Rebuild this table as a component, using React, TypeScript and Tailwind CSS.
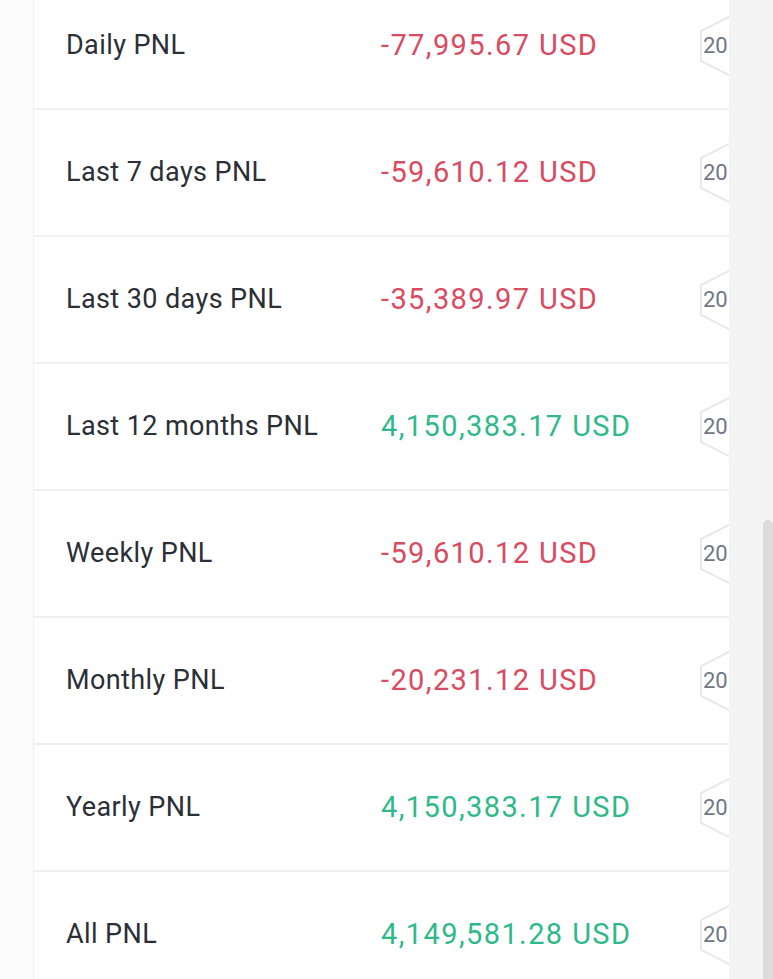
import React from "react";

type Row = { label: string; value: string; up: boolean };

const rows: Row[] = [
	{ label: "Daily PNL", value: "-77,995.67 USD", up: false },
	{ label: "Last 7 days PNL", value: "-59,610.12 USD", up: false },
	{ label: "Last 30 days PNL", value: "-35,389.97 USD", up: false },
	{ label: "Last 12 months PNL", value: "4,150,383.17 USD", up: true },
	{ label: "Weekly PNL", value: "-59,610.12 USD", up: false },
	{ label: "Monthly PNL", value: "-20,231.12 USD", up: false },
	{ label: "Yearly PNL", value: "4,150,383.17 USD", up: true },
	{ label: "All PNL", value: "4,149,581.28 USD", up: true },
];

function HexBadge() {
	return (
		<div className="relative w-[58px] h-[60px] shrink-0 flex items-center">
			<svg className="absolute inset-0" width="58" height="60" viewBox="0 0 58 60" fill="none">
				<path d="M29 1 L1 15 L1 45 L29 59 L57 45 L57 15 Z" stroke="#e8e8e8" strokeWidth="2" />
			</svg>
			<span className="relative pl-[3px] text-[22px] text-[#6f7785] font-['Roboto',sans-serif]">20</span>
		</div>
	);
}

export default function App() {
	return (
		<div className="h-[979px] w-[773px] overflow-hidden flex bg-[#fbfbfb]">
			<div className="w-[33px] shrink-0" />
			<div className="w-[696px] shrink-0 bg-white border-l border-[#f0f0f0] overflow-hidden">
				<div className="-mt-[17px]">
					{rows.map((r) => (
						<div key={r.label} className="h-[127px] flex items-center border-b-2 border-[#efefef] overflow-hidden">
							<div className="w-[347px] shrink-0 pl-[32px] text-[27px] tracking-[0.4px] text-[#2b2f36] font-['Roboto',sans-serif]">
								{r.label}
							</div>
							<div
								className={
									"w-[319px] shrink-0 text-[29px] tracking-[1.4px] font-['Roboto',sans-serif] " +
									(r.up ? "text-[#2fb98a]" : "text-[#d84b61]")
								}
							>
								{r.value}
							</div>
							<HexBadge />
						</div>
					))}
				</div>
			</div>
			<div className="flex-1 bg-[#f4f4f4] flex justify-end">
				<div className="w-[10px] mt-[520px] bg-[#dcdcdc] rounded-t-md" />
			</div>
		</div>
	);
}
